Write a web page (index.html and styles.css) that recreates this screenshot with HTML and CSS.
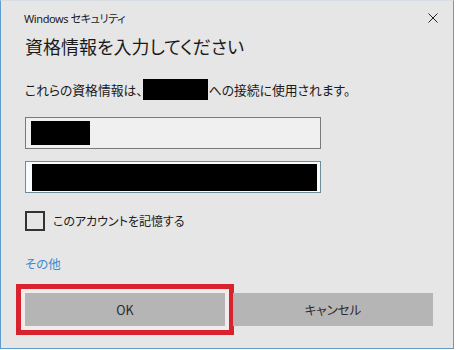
FILE: index.html
```html
<!DOCTYPE html>
<html lang="ja">
<head>
    <meta charset="UTF-8">
    <meta name="viewport" content="width=device-width, initial-scale=1.0">
    <title>Windows セキュリティ</title>
    <link rel="stylesheet" href="styles.css">
</head>
<body>
    <div class="window">
        <div class="titlebar">
            <div class="title">Windows セキュリティ</div>
            <svg class="close" width="10" height="10" viewBox="0 0 10 10">
                <path d="M0.5 0.5 L9.5 9.5 M9.5 0.5 L0.5 9.5" stroke="#222" stroke-width="1" fill="none"/>
            </svg>
        </div>

        <div class="content">
            <h1 class="heading">資格情報を入力してください</h1>
            <p class="message">これらの資格情報は、<span class="redact redact-host"></span>への接続に使用されます。</p>

            <div class="field">
                <span class="redact redact-user"></span>
            </div>
            <div class="field field-focused">
                <span class="redact redact-pass"></span>
            </div>

            <label class="remember">
                <span class="checkbox"></span>
                <span>このアカウントを記憶する</span>
            </label>

            <a class="more" href="#">その他</a>
        </div>

        <div class="buttons">
            <button class="btn btn-highlight">OK</button>
            <button class="btn">キャンセル</button>
        </div>
    </div>
</body>
</html>
```

FILE: styles.css
```css
* {
    margin: 0;
    padding: 0;
    box-sizing: border-box;
}

body {
    background: #ffffff;
    font-family: "Noto Sans", "Noto Sans CJK JP", sans-serif;
    font-feature-settings: "palt";
    color: #1a1a1a;
}

.window {
    width: 454px;
    height: 349px;
    background: #e6e6e6;
    border: 1px solid #5e9bcf;
    border-top-color: #d6dde4;
}

.titlebar {
    height: 33px;
    display: flex;
    justify-content: space-between;
    align-items: center;
    padding: 0 15px 0 23px;
}

.title {
    font-size: 11px;
    letter-spacing: -0.4px;
}

.content {
    padding: 0 24px;
    font-family: "Noto Sans CJK JP", sans-serif;
}

.heading {
    font-size: 18px;
    font-weight: 400;
    line-height: 24px;
}

.message {
    margin-top: 21px;
    font-size: 12.8px;
    line-height: 21px;
    display: flex;
    align-items: center;
}

.redact {
    display: block;
    background: #000;
}

.redact-host {
    width: 65px;
    height: 21px;
    margin: 0 1px 0 0;
}

.field {
    margin-top: 17px;
    width: 296px;
    height: 32px;
    border: 1px solid #7a7a7a;
    background: #f0f0f0;
    padding: 3px 5px;
}

.redact-user {
    width: 59px;
    height: 24px;
}

.field-focused {
    margin-top: 12px;
    border-color: #6d8d99;
    background: #f7fdff;
    padding: 2px 3px 1px 6px;
}

.redact-pass {
    width: 100%;
    height: 27px;
}

.remember {
    margin-top: 18px;
    display: flex;
    align-items: center;
    gap: 8px;
    font-size: 12px;
    line-height: 20px;
}

.checkbox {
    width: 20px;
    height: 20px;
    border: 2px solid #333;
}

.more {
    display: inline-block;
    margin-top: 23px;
    font-size: 12.5px;
    line-height: 20px;
    color: #3f8ccc;
    text-decoration: none;
}

.buttons {
    margin-top: 19px;
    display: grid;
    grid-template-columns: 1fr 1fr;
    gap: 8px;
    padding: 0 20px 0 24px;
}

.btn {
    height: 33px;
    border: none;
    background: #b5b5b5;
    color: #2a2a2a;
    font-family: "Noto Sans CJK JP", sans-serif;
    font-feature-settings: "palt";
    font-size: 12.5px;
}

.btn-highlight {
    box-shadow: 0 0 0 4px #f1ebeb, 0 0 0 9px #d8222e;
}
```
